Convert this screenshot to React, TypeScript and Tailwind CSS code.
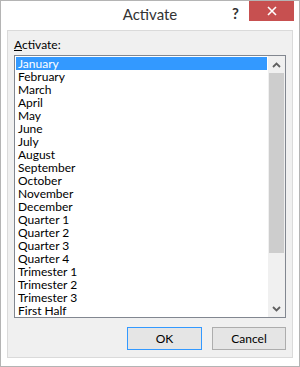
import * as React from "react";

const items = [
  "January", "February", "March", "April", "May", "June", "July", "August",
  "September", "October", "November", "December",
  "Quarter 1", "Quarter 2", "Quarter 3", "Quarter 4",
  "Trimester 1", "Trimester 2", "Trimester 3", "First Half",
];

export default function App() {
  const [selected, setSelected] = React.useState(0);

  return (
    <div className="flex h-[367px] w-[300px] flex-col border border-[#b4b4b4] bg-white font-['Lato','Noto_Sans',sans-serif] text-[12px] text-black">
      {/* title bar */}
      <div className="relative flex h-[29px] shrink-0 items-start justify-center">
        <div className="pt-[2px] text-[15px] text-[#333]">Activate</div>
        <div className="absolute right-[60px] top-[1px] text-[15px] font-bold text-[#333]">?</div>
        <button className="absolute right-[5px] top-0 flex h-[20px] w-[45px] items-center justify-center bg-[#c75050]">
          <svg width="10" height="10" viewBox="0 0 10 10">
            <path d="M1 1L9 9M9 1L1 9" stroke="white" strokeWidth="1.6" />
          </svg>
        </button>
      </div>

      {/* client area */}
      <div className="mx-[6px] flex h-[328px] flex-col border border-[#dadada] bg-[#f0f0f0] px-[6px]">
        <div className="pt-[6px] leading-[15px]">
          <span className="underline">A</span>ctivate:
        </div>
        <div className="mt-[3px] flex h-[263px] border border-[#828790] bg-white">
          <div className="flex-1 overflow-hidden p-[1px]">
            {items.map((m, i) => (
              <div
                key={m}
                onClick={() => setSelected(i)}
                className={
                  i === selected
                    ? "h-[13px] bg-[#3399ff] pl-[2px] leading-[13px] text-white"
                    : "h-[13px] pl-[2px] leading-[13px]"
                }
              >
                {m}
              </div>
            ))}
          </div>
          <div className="flex w-[17px] flex-col bg-[#f0f0f0]">
            <div className="flex h-[17px] items-center justify-center">
              <svg width="9" height="6" viewBox="0 0 9 6">
                <path d="M1 5L4.5 1.5L8 5" stroke="#606060" strokeWidth="1.8" fill="none" />
              </svg>
            </div>
            <div className="mx-[1px] h-[180px] bg-[#cdcdcd]" />
            <div className="flex-1" />
            <div className="flex h-[17px] items-center justify-center">
              <svg width="9" height="6" viewBox="0 0 9 6">
                <path d="M1 1L4.5 4.5L8 1" stroke="#606060" strokeWidth="1.8" fill="none" />
              </svg>
            </div>
          </div>
        </div>
        <div className="mt-[9px] flex justify-end gap-[10px]">
          <button className="h-[23px] w-[75px] border border-[#3399ff] bg-[#e5e5e5] text-[12px]">OK</button>
          <button className="h-[23px] w-[74px] border border-[#adadad] bg-[#e5e5e5] text-[12px]">Cancel</button>
        </div>
      </div>
    </div>
  );
}
